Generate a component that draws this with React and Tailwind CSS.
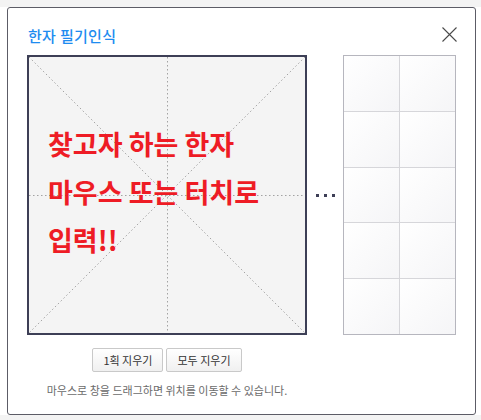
const KR = "font-['Noto_Sans_CJK_KR','Noto_Sans',sans-serif]"

function Guides() {
  return (
    <svg className="absolute inset-0 h-full w-full" viewBox="0 0 276 276" preserveAspectRatio="none" aria-hidden>
      <g stroke="#a3a3a3" strokeWidth="1" strokeDasharray="1.5 2.5" fill="none">
        <line x1="0" y1="0" x2="276" y2="276" />
        <line x1="276" y1="0" x2="0" y2="276" />
        <line x1="138.5" y1="0" x2="138.5" y2="276" />
        <line x1="0" y1="138.5" x2="276" y2="138.5" />
      </g>
    </svg>
  )
}

function CandidateGrid() {
  const cells = Array.from({ length: 10 })
  return (
    <div className="h-[280px] w-[114px] border border-[#b6b6be] bg-white">
      <div className="grid h-full grid-cols-2 grid-rows-5 gap-px bg-[#d6d6da]">
        {cells.map((_, i) => (
          <div key={i} className="bg-gradient-to-br from-white to-[#f5f5f7]" />
        ))}
      </div>
    </div>
  )
}

function EraseButton({ children }) {
  return (
    <button
      type="button"
      className="h-6 rounded-[2px] border border-[#c9c9c9] bg-gradient-to-b from-white to-[#f0f0f0] px-[10px] text-[11px] leading-none text-[#333]"
    >
      {children}
    </button>
  )
}

export default function App() {
  return (
    <div className={`h-[420px] w-[481px] bg-white ${KR}`}>
      <div className="h-[7px] bg-[#f3f3f3]" />
      <div className="ml-[7px] flex h-[408px] w-[469px] flex-col rounded-[3px] border border-[#5c5c66] bg-white px-[19px] pt-[18px]">
        <div className="flex items-start justify-between">
          <h2 className="ml-px text-[15px] font-medium leading-5 tracking-[0.3px] text-[#1e8cf0]">한자 필기인식</h2>
          <button type="button" className="-mr-[1px] mt-[1px] h-[15px] w-[15px]" aria-label="닫기">
            <svg viewBox="0 0 15 15" className="h-[15px] w-[15px]">
              <path d="M0.5 0.5 L14.5 14.5 M14.5 0.5 L0.5 14.5" stroke="#4a4a4a" strokeWidth="1.1" />
            </svg>
          </button>
        </div>

        <div className="mt-[9px] flex items-start">
          <div className="flex w-[280px] flex-col items-center">
            <div className="relative h-[280px] w-[280px] border-2 border-[#3d3f56] bg-[#f4f4f4]">
              <Guides />
              <div className="relative pl-[19px] pt-[63px] text-[27px] font-bold leading-[48px] text-[#ee1c25]">
                <p>찾고자 하는 한자</p>
                <p>마우스 또는 터치로</p>
                <p>입력!!</p>
              </div>
            </div>
            <div className="mt-[13px] flex gap-[3px]">
              <EraseButton>1획 지우기</EraseButton>
              <EraseButton>모두 지우기</EraseButton>
            </div>
            <p className="mt-[11px] text-[11px] leading-[15px] text-[#6b6b6b]">
              마우스로 창을 드래그하면 위치를 이동할 수 있습니다.
            </p>
          </div>

          <div className="flex h-[280px] w-[36px] items-center justify-center gap-[5px] pl-px">
            <span className="h-[3px] w-[3px] bg-[#3d3f56]" />
            <span className="h-[3px] w-[3px] bg-[#3d3f56]" />
            <span className="h-[3px] w-[3px] bg-[#3d3f56]" />
          </div>

          <CandidateGrid />
        </div>
      </div>
      <div className="h-[5px] bg-[#f3f3f3]" />
    </div>
  )
}
